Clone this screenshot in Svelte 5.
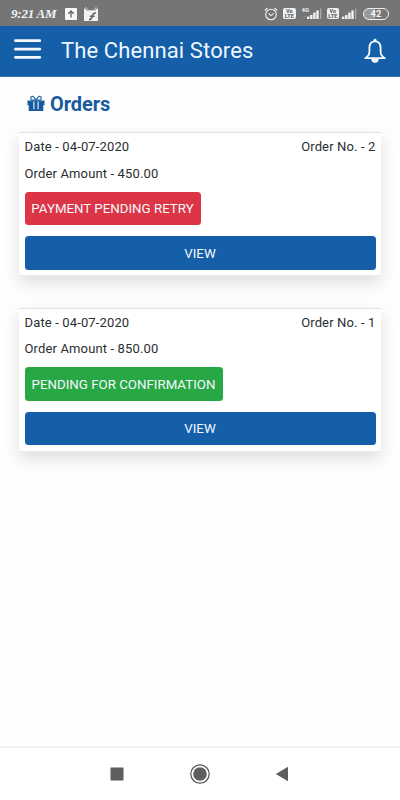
<script>
  const orders = [
    { no: 2, date: '04-07-2020', amount: '450.00', label: 'PAYMENT PENDING RETRY', kind: 'danger' },
    { no: 1, date: '04-07-2020', amount: '850.00', label: 'PENDING FOR CONFIRMATION', kind: 'success' }
  ];
</script>

{#snippet signal()}
  <svg class="signal" width="15" height="12" viewBox="0 0 15 12" fill="#f4f4f4">
    <rect x="0" y="8.6" width="2.4" height="2.4" /><rect x="3.1" y="7" width="2.4" height="4" />
    <rect x="6.2" y="4.6" width="2.4" height="6.4" /><rect x="9.3" y="2.4" width="2.4" height="8.6" />
    <rect x="13" y="0.5" width="1.3" height="10.5" fill="#aaa" />
  </svg>
{/snippet}

{#snippet volte()}
  <span class="volte"><span>Vo</span><span>LTE</span></span>
{/snippet}

<div class="screen">
  <div class="status">
    <span class="time">9:21 AM</span>
    <svg class="upload" width="12" height="12" viewBox="0 0 12 12">
      <rect width="12" height="12" rx="1" fill="#f7f7f7" />
      <path d="M6 9.5V3M3.3 5.7 6 3l2.7 2.7" fill="none" stroke="#686868" stroke-width="1.4" />
    </svg>
    <svg class="shop" width="14" height="14" viewBox="0 0 14 14">
      <path d="M0 1.5h1l2 2h8l2-2h1V14H0z" fill="#f2f2f2" />
      <path d="M2 0v1.2l3 2.3h4l3-2.3V0" fill="none" stroke="#d8d8d8" stroke-width=".8" />
      <path d="M12 6C9.2 5.6 8.7 7 8.3 9.2 8 11.3 7.3 12.6 5 12.8M5.8 9.2h4.8" fill="none" stroke="#666" stroke-width="1.6" />
    </svg>
    <div class="right">
      <svg width="14" height="14" viewBox="0 0 14 14" fill="none" stroke="#f2f2f2" stroke-width="1.1">
        <circle cx="7" cy="7.5" r="5.3" /><path d="M.8 3.5 3.5 1M13.2 3.5 10.5 1M4.7 6.5 7 8.6l2.6-2.3" />
      </svg>
      {@render volte()}
      <div class="net"><span class="g">4G</span><span class="arrows">↓↑</span>{@render signal()}</div>
      {@render volte()}
      {@render signal()}
      <span class="battery"><b>42</b></span>
    </div>
  </div>

  <header>
    <svg class="menu" width="28" height="20" viewBox="0 0 28 20">
      <path d="M1.4 1.7h24.4M1.4 10.2h24.4M1.4 18.4h24.4" stroke="#f3f8ff" stroke-width="2.7" stroke-linecap="round" />
    </svg>
    <h1>The Chennai Stores</h1>
    <svg class="bell" width="24" height="26" viewBox="0 0 24 26">
      <path d="M12 3.3C8.1 3.3 6.4 6.4 6.4 10v3.7c0 3-1.5 4.9-4.2 6.5h19.6c-2.7-1.6-4.2-3.5-4.2-6.5V10c0-3.6-1.7-6.7-5.6-6.7Z" fill="none" stroke="#f4faff" stroke-width="1.8" stroke-linejoin="round" />
      <path d="M10.4 3.5V2.3a1.6 1.6 0 0 1 3.2 0v1.2ZM8.3 21h7.4a3.7 3.7 0 0 1-7.4 0Z" fill="#f4faff" />
    </svg>
  </header>

  <main>
    <h2>
      <svg width="18" height="17" viewBox="0 0 18 17">
        <path d="M.5 5.6h17v4.6H.5zM1.7 10h14.6v6H1.7z" fill="#175b9f" />
        <path d="M6.3 6.6h1.2v7.7H6.3zM10.5 6.6h1.2v7.7h-1.2z" fill="#dcecf8" />
        <path d="M9 5.6C7.9 3 6.6 1.3 5.2 1.4 3.2 1.6 3.3 5.2 5.4 5.2H9Zm0 0c1.1-2.6 2.4-4.3 3.8-4.2 2 .2 1.9 3.8-.2 3.8H9Z" fill="none" stroke="#2c6aa8" stroke-width="1.3" />
      </svg>
      <span>Orders</span>
    </h2>
    {#each orders as order}
      <section class="card">
        <div class="row"><span>Date - {order.date}</span><span>Order No. - {order.no}</span></div>
        <div class="row amount">Order Amount - {order.amount}</div>
        <button class="tag {order.kind}">{order.label}</button>
        <button class="view">VIEW</button>
      </section>
    {/each}
  </main>

  <nav>
    <svg width="14" height="14" viewBox="0 0 14 14"><rect x=".5" y=".5" width="13" height="13" fill="#5e5e5e" /></svg>
    <svg width="20" height="20" viewBox="0 0 20 20">
      <circle cx="10" cy="10" r="9.2" fill="none" stroke="#555" stroke-width="1.2" /><circle cx="10" cy="10" r="6.8" fill="#5e5e5e" />
    </svg>
    <svg width="14" height="16" viewBox="0 0 14 16"><path d="M.8 8 13 .8v14.4z" fill="#5e5e5e" /></svg>
  </nav>
</div>

<style>
  :global(body) { margin: 0; background: #fff; }
  .screen { width: 400px; height: 800px; display: flex; flex-direction: column; overflow: hidden; font-family: Roboto, sans-serif; color: #2b2e31; background: #fefefe; }
  .status { height: 26px; flex: none; box-sizing: border-box; display: flex; align-items: center; padding: 2px 11px 0 11px; background: #757575; border-bottom: 1px solid #6d747c; color: #f4f4f4; }
  .time { width: 54px; font: italic bold 13px "Liberation Serif", serif; white-space: nowrap; letter-spacing: -0.2px; }
  .shop { margin-left: 7px; }
  .right { margin-left: auto; display: flex; align-items: center; }
  .volte { width: 12.5px; height: 11px; margin-left: 5px; border-radius: 2px; background: #f2f2f2; color: #666; display: flex; flex-direction: column; align-items: center; justify-content: center; font-size: 5.5px; line-height: 5px; font-weight: 900; }
  .net { display: grid; grid-template-columns: 5px 15px; align-items: end; margin-left: 6px; position: relative; }
  .g { position: absolute; left: 0; top: -1px; font-size: 6px; line-height: 7px; font-weight: 700; }
  .arrows { font-size: 4px; line-height: 6px; color: #c4c4c4; }
  .signal { display: block; margin-top: 1px; }
  .volte + .signal { margin-left: 3px; }
  .net + .volte { margin-left: 5px; }
  .battery { width: 24px; height: 10px; margin-left: 6px; border: 1px solid #eee; border-radius: 6px; background: linear-gradient(90deg, #999 45%, #777 45%); font-size: 9.5px; line-height: 10px; text-align: center; }
  header { height: 51px; flex: none; box-sizing: border-box; display: flex; align-items: center; padding: 0 13px 0 14px; background: #155fa8; border-bottom: 1px solid #3a74af; }
  .menu { margin-top: -4px; }
  h1 { margin: 0 auto 0 19px; font-size: 22px; line-height: 28px; font-weight: 400; color: #edf6ff; letter-spacing: .11px; }
  .bell { margin-top: -1px; }
  main { flex: 1; padding: 13.5px 19px 0; }
  h2 { margin: 0 0 15.5px 8px; height: 26px; display: flex; align-items: center; gap: 5px; font-size: 20px; line-height: 26px; font-weight: 700; color: #175b9f; letter-spacing: -.05px; }
  h2 svg { margin-top: -1px; }
  .card { box-sizing: border-box; height: 144px; margin-bottom: 31.5px; padding: 5px 5.5px 0; background: #fff; border-top: 1px solid #e3e3e3; border-bottom: 1px solid #e9e9e9; box-shadow: 0 7px 16px rgba(0, 0, 0, .13); }
  .row { display: flex; justify-content: space-between; font-size: 13px; line-height: 18px; letter-spacing: .14px; }
  .amount { margin-top: 8.5px; }
  button { display: block; height: 33.5px; border: 0; padding: 0; border-radius: 3.5px; font: 400 13.3px/33px Roboto, sans-serif; color: #f4f8ff; }
  .tag { margin-top: 9.3px; }
  .danger { width: 176px; background: #dc3545; }
  .success { width: 198px; background: #28a745; }
  .view { width: 100%; margin-top: 11.2px; background: #155fa8; }
  nav { height: 54px; flex: none; box-sizing: border-box; display: flex; justify-content: space-between; align-items: center; padding: 0 111px 0 110px; border-top: 2px solid #f2f2f2; background: #fff; }
</style>
